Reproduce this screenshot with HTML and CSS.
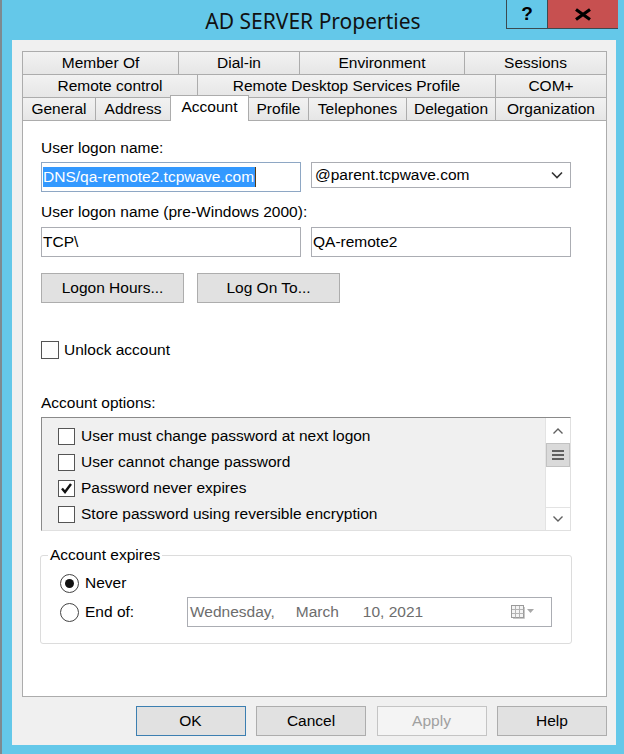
FILE: index.html
```html
<!DOCTYPE html>
<html>
<head>
<meta charset="utf-8">
<title>AD SERVER Properties</title>
<link rel="stylesheet" href="styles.css">
</head>
<body>
<div class="window">
  <div class="titlebar">
    <div class="title">AD SERVER Properties</div>
    <div class="caption-buttons">
      <div class="cap-btn cap-help">?</div>
      <div class="cap-btn cap-close">
        <svg width="18" height="13" viewBox="0 0 18 13"><path d="M2 1.5 L16 11.5 M16 1.5 L2 11.5" stroke="#000" stroke-width="3.2" fill="none"/></svg>
      </div>
    </div>
  </div>

  <div class="client">
    <div class="tabs">
      <div class="tab-row">
        <div class="tab t-member">Member Of</div>
        <div class="tab t-dialin">Dial-in</div>
        <div class="tab t-env">Environment</div>
        <div class="tab t-last">Sessions</div>
      </div>
      <div class="tab-row">
        <div class="tab t-remote">Remote control</div>
        <div class="tab t-rds">Remote Desktop Services Profile</div>
        <div class="tab t-last">COM+</div>
      </div>
      <div class="tab-row">
        <div class="tab t-general">General</div>
        <div class="tab t-address">Address</div>
        <div class="tab t-account active">Account</div>
        <div class="tab t-profile">Profile</div>
        <div class="tab t-tel">Telephones</div>
        <div class="tab t-deleg">Delegation</div>
        <div class="tab t-last">Organization</div>
      </div>
    </div>

    <div class="panel">
      <div class="label">User logon name:</div>
      <div class="field-row">
        <div class="textbox focused"><span class="selection">DNS/qa-remote2.tcpwave.com</span><span class="caret"></span></div>
        <div class="combo">
          <span>@parent.tcpwave.com</span>
          <svg class="combo-arrow" width="12" height="8" viewBox="0 0 12 8"><path d="M1 1.5 L6 6.5 L11 1.5" stroke="#333" stroke-width="1.6" fill="none"/></svg>
        </div>
      </div>

      <div class="label label-2">User logon name (pre-Windows 2000):</div>
      <div class="field-row">
        <div class="textbox">TCP\</div>
        <div class="textbox">QA-remote2</div>
      </div>

      <div class="button-row">
        <div class="btn btn-wide">Logon Hours...</div>
        <div class="btn btn-wide">Log On To...</div>
      </div>

      <div class="check-row unlock">
        <span class="checkbox"></span>
        <span>Unlock account</span>
      </div>

      <div class="label label-options">Account options:</div>
      <div class="listbox">
        <div class="list-items">
          <div class="list-item"><span class="checkbox small"></span><span>User must change password at next logon</span></div>
          <div class="list-item"><span class="checkbox small"></span><span>User cannot change password</span></div>
          <div class="list-item"><span class="checkbox small"><svg width="15" height="15" viewBox="0 0 15 15"><path d="M3 7.5 L6 11 L12 3" stroke="#111" stroke-width="2.4" fill="none"/></svg></span><span>Password never expires</span></div>
          <div class="list-item"><span class="checkbox small"></span><span>Store password using reversible encryption</span></div>
        </div>
        <div class="scrollbar">
          <div class="sb-btn">
            <svg width="12" height="8" viewBox="0 0 12 8"><path d="M1.5 6.5 L6 2 L10.5 6.5" stroke="#606060" stroke-width="1.4" fill="none"/></svg>
          </div>
          <div class="sb-thumb">
            <span class="grip"></span><span class="grip"></span><span class="grip"></span>
          </div>
          <div class="sb-track"></div>
          <div class="sb-btn sb-down">
            <svg width="12" height="8" viewBox="0 0 12 8"><path d="M1.5 1.5 L6 6 L10.5 1.5" stroke="#606060" stroke-width="1.4" fill="none"/></svg>
          </div>
        </div>
      </div>

      <fieldset class="group">
        <legend>Account expires</legend>
        <div class="radio-row">
          <span class="radio checked"><span class="dot"></span></span>
          <span>Never</span>
        </div>
        <div class="radio-row endof">
          <span class="radio"></span>
          <span class="endof-label">End of:</span>
          <div class="datebox">
            <span class="d-day">Wednesday,</span>
            <span class="d-month">March</span>
            <span class="d-date">10, 2021</span>
            <svg class="cal-icon" width="24" height="14" viewBox="0 0 24 14">
              <rect x="0.5" y="0.5" width="12" height="12" fill="#f4f4f4" stroke="#9a9a9a"/>
              <path d="M4.5 1 V12.5 M8.5 1 V12.5 M1 4.5 H12.5 M1 8.5 H12.5" stroke="#b4b4b4" stroke-width="1"/>
              <path d="M13.5 2 V13.5 H2" stroke="#c8c8c8" stroke-width="1" fill="none"/>
              <path d="M16 4 H23 L19.5 8 Z" fill="#a8a8a8"/>
            </svg>
          </div>
        </div>
      </fieldset>
    </div>

    <div class="dialog-buttons">
      <div class="btn dlg default">OK</div>
      <div class="btn dlg">Cancel</div>
      <div class="btn dlg disabled">Apply</div>
      <div class="btn dlg">Help</div>
    </div>
  </div>
</div>
</body>
</html>
```

FILE: styles.css
```css
* {
  box-sizing: border-box;
}

html, body {
  margin: 0;
  padding: 0;
}

body {
  width: 624px;
  height: 754px;
  overflow: hidden;
  font-family: "Liberation Sans", Arial, sans-serif;
  font-size: 15.5px;
  color: #000;
}

.window {
  width: 624px;
  height: 754px;
  background: #64c8e9;
  border-left: 2px solid #7d8a90;
  display: flex;
  flex-direction: column;
}

/* Title bar */
.titlebar {
  height: 40px;
  display: grid;
  grid-template-columns: 1fr auto 1fr;
}

.title {
  grid-column: 2;
  font-family: "Noto Sans", "Open Sans", sans-serif;
  font-size: 21px;
  line-height: 40px;
  color: #111;
  padding-top: 1px;
}

.caption-buttons {
  grid-column: 3;
  justify-self: end;
  align-self: start;
  display: flex;
  margin-right: 6px;
  height: 29px;
  border-left: 1px solid #3b4a50;
  border-bottom: 1px solid #3b4a50;
}

.cap-btn {
  display: flex;
  align-items: center;
  justify-content: center;
  height: 28px;
}

.cap-help {
  width: 41px;
  background: #64c8e9;
  font-family: "Liberation Sans", Arial, sans-serif;
  font-weight: bold;
  font-size: 19px;
  border-right: 1px solid #3b4a50;
}

.cap-close {
  width: 70px;
  background: #c75050;
}

/* Client area */
.client {
  flex: 1;
  margin: 0 8px 9px 10px;
  background: #f0f0f0;
  padding: 11px 9px 9px 10px;
  display: flex;
  flex-direction: column;
}

.tabs {
  display: flex;
  flex-direction: column;
}

.tab-row {
  display: flex;
  height: 23px;
}

.tab {
  height: 23px;
  border-top: 1px solid #acacac;
  border-left: 1px solid #acacac;
  background: linear-gradient(#f2f2f2, #e6e6e6);
  text-align: center;
  line-height: 21px;
  white-space: nowrap;
}

.t-last {
  flex: 1;
  border-right: 1px solid #acacac;
}

.t-member { width: 156px; }
.t-dialin { width: 121px; }
.t-env { width: 165px; }
.t-remote { width: 175px; }
.t-rds { width: 298px; }
.t-general { width: 73px; }
.t-address { width: 75px; }
.t-account { width: 79px; }
.t-profile { width: 59px; }
.t-tel { width: 98px; }
.t-deleg { width: 89px; }

.tab.active {
  position: relative;
  z-index: 1;
  background: #fff;
  height: 26px;
  margin-top: -2px;
  border-right: 1px solid #acacac;
  line-height: 22px;
}

.tab.active + .tab {
  border-left: none;
}

/* Panel */
.panel {
  flex: 1;
  background: #fff;
  border: 1px solid #acacac;
  padding: 18px 35px 0 18px;
  display: flex;
  flex-direction: column;
}

.label {
  line-height: 18px;
  margin-bottom: 5px;
}

.label-2 {
  margin-top: 11px;
  margin-bottom: 6px;
}

.field-row {
  display: flex;
  gap: 10px;
  align-items: flex-start;
}

.textbox {
  width: 260px;
  height: 30px;
  border: 1px solid #abadb3;
  background: #fff;
  padding-left: 1px;
  line-height: 28px;
  display: flex;
  align-items: center;
  white-space: nowrap;
}

.textbox.focused {
  border-color: #8ea7c4;
}

.selection {
  background: #3399ff;
  color: #fff;
  line-height: 20px;
  padding-right: 1px;
}

.caret {
  width: 1px;
  height: 20px;
  background: #5a3a10;
}

.combo {
  width: 260px;
  height: 26px;
  border: 1px solid #abadb3;
  background: #fff;
  padding: 0 7px 0 3px;
  display: flex;
  align-items: center;
  justify-content: space-between;
  white-space: nowrap;
}

.button-row {
  display: flex;
  gap: 13px;
  margin-top: 16px;
}

.btn {
  height: 30px;
  background: #e1e1e1;
  border: 1px solid #adadad;
  display: flex;
  align-items: center;
  justify-content: center;
  white-space: nowrap;
}

.btn-wide {
  width: 143px;
}

.check-row {
  display: flex;
  align-items: center;
  gap: 5px;
  height: 18px;
}

.unlock {
  margin-top: 38px;
}

.checkbox {
  width: 18px;
  height: 18px;
  border: 1px solid #555;
  background: #fff;
  display: flex;
  align-items: center;
  justify-content: center;
  flex: none;
}

.checkbox.small {
  width: 17px;
  height: 17px;
}

.label-options {
  margin-top: 35px;
}

/* Listbox */
.listbox {
  height: 114px;
  border: 1px solid;
  border-color: #8a8a8a #e0e0e0 #e0e0e0 #8a8a8a;
  background: #f0f0f0;
  display: flex;
}

.list-items {
  flex: 1;
  padding: 5px 0 0 16px;
}

.list-item {
  height: 26px;
  display: flex;
  align-items: center;
  gap: 6px;
  white-space: nowrap;
}

.scrollbar {
  width: 25px;
  background: #fff;
  border-left: 1px solid #e3e3e3;
  display: flex;
  flex-direction: column;
}

.sb-btn {
  height: 25px;
  display: flex;
  align-items: center;
  justify-content: center;
}

.sb-down {
  height: 23px;
  border-top: 1px solid #e3e3e3;
}

.sb-thumb {
  height: 24px;
  background: #dadada;
  border: 1px solid #c2c2c2;
  display: flex;
  flex-direction: column;
  align-items: center;
  justify-content: center;
  gap: 2px;
}

.grip {
  width: 12px;
  height: 2px;
  background: #606060;
}

.sb-track {
  flex: 1;
}

/* Group */
.group {
  margin: 15px -1px 0 -1px;
  border: 1px solid #dcdcdc;
  border-radius: 3px;
  padding: 9px 0 16px 19px;
}

.group legend {
  margin-left: -12px;
  padding: 0 2px;
  line-height: 18px;
}

.radio-row {
  display: flex;
  align-items: center;
  height: 20px;
}

.radio {
  width: 19px;
  height: 19px;
  border: 1px solid #444;
  border-radius: 50%;
  background: #fff;
  display: flex;
  align-items: center;
  justify-content: center;
  margin-right: 6px;
  flex: none;
}

.dot {
  width: 9px;
  height: 9px;
  border-radius: 50%;
  background: #111;
}

.radio-row.endof {
  height: 30px;
  margin-top: 4px;
}

.endof-label {
  width: 102px;
}

.datebox {
  width: 365px;
  height: 30px;
  border: 1px solid #abadb3;
  background: #fff;
  color: #6d6d6d;
  display: flex;
  align-items: center;
  padding: 0 16px 0 2px;
  white-space: nowrap;
}

.d-month {
  margin-left: 21px;
}

.d-date {
  margin-left: 24px;
}

.cal-icon {
  margin-left: auto;
}

/* Dialog buttons */
.dialog-buttons {
  display: flex;
  justify-content: flex-end;
  gap: 10.5px;
  margin-top: 9px;
}

.btn.dlg {
  width: 110px;
}

.btn.default {
  border-color: #3c7fb1;
}

.btn.disabled {
  background: #f4f4f4;
  border-color: #c4c4c4;
  color: #a0a0a0;
}
```
